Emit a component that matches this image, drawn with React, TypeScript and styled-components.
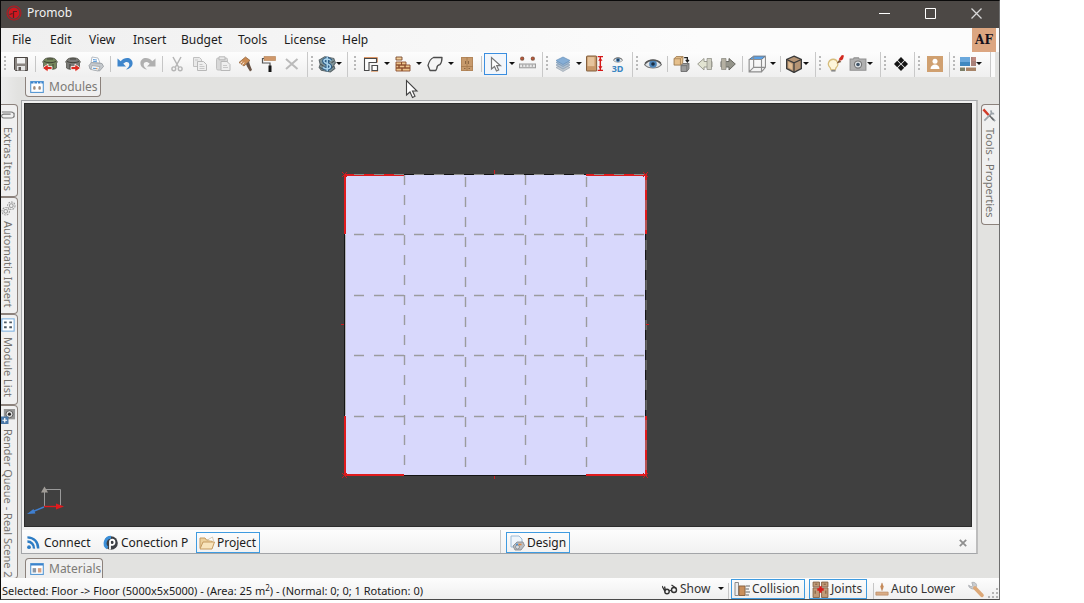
import React from 'react';
import styled, { createGlobalStyle, css } from 'styled-components';

const GlobalStyle = createGlobalStyle`
  * { box-sizing: border-box; }
  html, body { margin: 0; background: #ffffff; }
  body {
    font-family: "Noto Sans", "Open Sans", sans-serif;
    font-size: 12px;
    line-height: 16px;
    color: #1c1c1c;
  }
  button { font: inherit; color: inherit; margin: 0; padding: 0; border: 0; background: none; }
  svg { display: block; flex: none; }
`;

const Page = styled.div`
  display: flex;
  min-height: 100vh;
  padding: 0 84px 3px 0;
`;

const Window = styled.div`
  position: relative;
  flex: 1;
  min-width: 0;
  display: flex;
  flex-direction: column;
  background: #e2e2e0;
  border: 1px solid #0a0a0a;
  border-right-color: #6e6e6e;
  border-bottom-color: #4a4a4a;
`;

const TitleBar = styled.header`
  display: flex;
  align-items: center;
  height: 27px;
  padding: 0 0 3px 5px;
  background: #4c4845;
  color: #f2f2f2;
`;

const TitleText = styled.h1`
  margin: 0;
  padding-left: 5px;
  flex: 1;
  font-size: 12px;
  font-weight: 400;
  line-height: 16px;
`;

const WindowButton = styled.button`
  width: 46px;
  height: 22px;
  display: flex;
  align-items: center;
  justify-content: center;
`;

const MenuBar = styled.nav`
  display: flex;
  align-items: center;
  height: 24px;
  padding: 0 3px;
  background: linear-gradient(90deg, #efefef, #fcfcfc 70%);
`;

const MenuItem = styled.button<{ $w: number }>`
  width: ${(p) => p.$w}px;
  padding-left: 8px;
  text-align: left;
  white-space: nowrap;
`;

const Account = styled.button`
  width: 24px;
  height: 24px;
  margin-left: auto;
  background: #dca681;
  color: #14101c;
  font-family: "DejaVu Serif", serif;
  font-size: 12px;
  font-weight: 700;
`;

const ToolStrip = styled.div`
  display: flex;
  height: 25px;
  margin-right: 4px;
  background: #fbfbfb;
`;

const ToolGroup = styled.div<{ $w: number; $pad?: number }>`
  display: flex;
  align-items: center;
  flex: none;
  width: ${(p) => p.$w}px;
  padding: 0 0 2px ${(p) => p.$pad ?? 0}px;
  background: linear-gradient(#fdfdfd, #efefef);
  border-right: 1px solid #c9c9c9;
`;

const Grip = styled.span`
  width: 2px;
  height: 15px;
  margin: 0 3px;
  flex: none;
  background: repeating-linear-gradient(#b9b9b9 0 2px, transparent 2px 4px);
`;

const Separator = styled.span<{ $w?: number }>`
  width: ${(p) => p.$w ?? 6}px;
  height: 16px;
  flex: none;
  background: linear-gradient(#c6c6c6, #c6c6c6) center / 1px 100% no-repeat;
`;

const ToolButton = styled.button<{ $active?: boolean }>`
  width: 23px;
  height: 22px;
  flex: none;
  display: flex;
  align-items: center;
  justify-content: center;
  ${(p) =>
    p.$active &&
    css`
      border: 1px solid #3a8ee0;
      background: #f2f6fb;
    `}
`;

const Caret = styled.button`
  width: 9px;
  height: 22px;
  flex: none;
  display: flex;
  align-items: center;
  justify-content: center;
  &::before {
    content: '';
    border: 3px solid transparent;
    border-top-color: #111;
    border-bottom: 0;
  }
`;

const DropTool = styled.button`
  width: 31px;
  height: 22px;
  padding-left: 2px;
  flex: none;
  display: flex;
  align-items: center;
  &::after {
    content: '';
    border: 3px solid transparent;
    border-top-color: #111;
    border-bottom: 0;
  }
`;

const Body = styled.div`
  flex: 1;
  display: flex;
  min-height: 501px;
`;

const Dock = styled.div<{ $side: 'left' | 'right' }>`
  width: ${(p) => (p.$side === 'left' ? 17 : 18)}px;
  flex: none;
  display: flex;
  flex-direction: column;
  padding-top: 27px;
  overflow: hidden;
  contain: size;
  background: ${(p) => (p.$side === 'left' ? 'linear-gradient(90deg, #ececec, #e2e2e0)' : 'none')};
`;

const SideTab = styled.button<{ $h: number; $side: 'left' | 'right' }>`
  height: ${(p) => p.$h}px;
  flex: none;
  display: flex;
  flex-direction: column;
  align-items: center;
  gap: 5px;
  padding: 3px 2px 0 0;
  background: #f0f0f0;
  border: 1px solid #8c827c;
  font-size: 11px;
  ${(p) =>
    p.$side === 'left'
      ? css`
          border-left: 0;
          border-radius: 0 4px 4px 0;
        `
      : css`
          border-right: 0;
          border-radius: 4px 0 0 4px;
        `}
  color: #74726e;
  & > span {
    writing-mode: vertical-rl;
    line-height: 16px;
    white-space: nowrap;
  }
`;

const Center = styled.main`
  flex: 1;
  min-width: 0;
  display: flex;
  flex-direction: column;
  padding: 0 3px;
`;

const PanelTab = styled.button<{ $edge: 'top' | 'bottom'; $w: number }>`
  width: ${(p) => p.$w}px;
  height: 20px;
  margin-left: 4px;
  flex: none;
  display: flex;
  align-items: center;
  gap: 5px;
  padding-left: 4px;
  background: #f0f0f0;
  color: #7c7a76;
  border: 1px solid #8c827c;
  white-space: nowrap;
  ${(p) =>
    p.$edge === 'top'
      ? css`
          border-top: 0;
          border-radius: 0 0 4px 4px;
          margin-bottom: 3px;
        `
      : css`
          border-bottom: 0;
          border-radius: 4px 4px 0 0;
          margin-top: 4px;
        `}
`;

const Frame = styled.section`
  flex: 1;
  display: flex;
  flex-direction: column;
  background: #f0f0f0;
  border: 1px solid #a3a5a8;
  border-right: 2px solid #bdbdbd;
`;

const Viewport = styled.div`
  position: relative;
  flex: 1;
  display: flex;
  align-items: center;
  justify-content: center;
  margin: 2px 4px 3px 2px;
  padding: 18px 8px 0 0;
  background: #404040;
  border: 1px solid #2c2c2c;
`;

const Axes = styled.svg`
  position: absolute;
  left: 0;
  bottom: 9px;
`;

const ViewTabs = styled.div`
  display: flex;
  height: 23px;
  background: linear-gradient(#fdfdfd, #f1f1f1);
`;

const TabHalf = styled.div<{ $last?: boolean }>`
  flex: 1;
  display: flex;
  align-items: flex-end;
  gap: 4px;
  padding: ${(p) => (p.$last ? '0 0 0 5px' : '0 8px 0 0')};
  border-left: ${(p) => (p.$last ? '1px solid #c9c9c9' : '0')};
`;

const ViewTab = styled.button<{ $w: number; $active?: boolean }>`
  width: ${(p) => p.$w}px;
  height: 21px;
  flex: none;
  display: flex;
  align-items: center;
  gap: ${(p) => (p.$active ? 2 : 3)}px;
  padding-left: ${(p) => (p.$active ? 2 : 4)}px;
  white-space: nowrap;
  border: ${(p) => (p.$active ? '1px solid #3f9be0' : '0')};
`;

const CloseTab = styled.button`
  margin: 0 7px 0 auto;
  width: 10px;
  height: 21px;
  display: flex;
  align-items: center;
`;

const StatusBar = styled.footer`
  display: flex;
  align-items: flex-end;
  height: 21px;
  background: linear-gradient(#fdfdfd, #efefef);
  white-space: nowrap;
  sup { font-size: 8px; line-height: 0; vertical-align: 4px; }
`;

const StatusText = styled.p`
  flex: 1;
  margin: 0;
  padding-left: 1px;
  font-size: 11px;
`;

const StatusButton = styled.button<{ $w: number; $active?: boolean }>`
  width: ${(p) => p.$w}px;
  height: 20px;
  margin-right: 4px;
  flex: none;
  display: flex;
  align-items: center;
  gap: 2px;
  padding-left: ${(p) => (p.$active ? 2 : 0)}px;
  color: #333;
  border: ${(p) => (p.$active ? '1px solid #3f9be0' : '0')};
`;

const Pointer = styled.svg`
  position: absolute;
  left: 404px;
  top: 78px;
`;

const Ico = ({ s = 16, children }: { s?: number; children: React.ReactNode }) => (
  <svg width={s} height={s} viewBox="0 0 16 16" fill="none" aria-hidden="true">
    {children}
  </svg>
);

const Logo = () => (
  <Ico>
    <circle cx="8" cy="8" r="7" stroke="#b81820" strokeWidth="1.1" />
    <circle cx="8" cy="8" r="5.4" fill="#d01820" />
    <path d="M7.500 13V6.500h3.500M3.500 9.500l3-1" stroke="#5c1c1e" strokeWidth="1.200" />
  </Ico>
);

const Save = () => (
  <Ico>
    <path d="M1.500 1.500h13v13h-12l-1-1z" fill="#8b8682" stroke="#4a4542" />
    <path d="M4 2h8v5.500H4z" fill="#f1f1f1" />
    <path d="M4 10h8v4.500H4z" fill="#e4e4e4" />
    <path d="M5.500 11H8v3.500H5.500z" fill="#5a5451" />
  </Ico>
);

const Cart = ({ body, flip }: { body: string; flip?: boolean }) => (
  <Ico>
    <path d="M2 4c1-3 11-3 12 0l1.500 2-1 1v5c-2 2-11 2-13 0V7l-1-1z" fill={body} stroke="#4b4a42" strokeWidth=".7" />
    <path d="M2 5.500c3 1.600 9 1.600 12 0M5 3h6M5 8v5M11 8v5" stroke="#33332b" strokeWidth=".8" />
    <path
      d={flip ? 'M6 10.500h4V8l5.500 4-5.500 4v-2.500H6z' : 'M10 10.500H6V8L.5 12 6 16v-2.500h4z'}
      fill="#d92a20"
      stroke="#fff"
      strokeWidth=".8"
    />
  </Ico>
);

const Printer = () => (
  <Ico>
    <path d="M3 7 4 1l6 1 2 5z" fill="#fff" stroke="#98a2ac" strokeWidth=".7" />
    <path d="M5 3.500l4 .6M5 5.200l4 .6" stroke="#5d9bd8" />
    <path d="M1 9.500 3.500 6.500l10.500 1 1.500 3-4 4.500L2 13z" fill="#c4c8cc" stroke="#93989d" strokeWidth=".8" />
    <path d="M4 9.500l8 1.200-2 4.300-7-1.500z" fill="#eef1f3" stroke="#93989d" strokeWidth=".6" />
    <path d="M5 12.300l3 .3" stroke="#5d9bd8" />
    <path d="M8 12.600l1.500.2" stroke="#e48a3c" />
  </Ico>
);

const Undo = ({ color, redo }: { color: string; redo?: boolean }) => (
  <Ico>
    <g transform={redo ? 'translate(16 0) scale(-1 1)' : undefined}>
      <path d="M.5 2.500v8H9L6.300 7.700C9 5 12 6 12.300 8.200c.2 2-1.300 3.800-3.300 5.300 4-.5 6.500-3 6.600-6.200C15.600 1.500 8 0 3.700 5.300z" fill={color} />
    </g>
  </Ico>
);

const Cut = () => (
  <Ico>
    <path d="M4 1l5.500 10M12 1 6.500 11" stroke="#b5b5b5" strokeWidth="1.500" />
    <circle cx="4.800" cy="12.800" r="1.900" stroke="#b5b5b5" strokeWidth="1.400" />
    <circle cx="11.200" cy="12.800" r="1.900" stroke="#b5b5b5" strokeWidth="1.400" />
  </Ico>
);

const Copy = () => (
  <Ico>
    <path d="M1.500 1.500h6l2 2v7h-8z" fill="#e9e9e9" stroke="#c0c0c0" />
    <path d="M5.500 5.500h6l3 3v6h-9z" fill="#efefef" stroke="#b8b8b8" />
    <path d="M7.500 8.500h3M7.500 10.500h5M7.500 12.500h5M3 4h3" stroke="#c8c8c8" />
  </Ico>
);

const Paste = () => (
  <Ico>
    <rect x="1.500" y="2" width="11" height="12" rx="1.500" fill="#d8d8d8" stroke="#c0c0c0" />
    <path d="M4 .8h6v3H4z" fill="#e9e9e9" stroke="#b8b8b8" />
    <path d="M6 5.500h6l3 3v6H6z" fill="#efefef" stroke="#b8b8b8" />
    <path d="M8 9.500h4M8 11.500h5" stroke="#c8c8c8" />
  </Ico>
);

const Brush = () => (
  <Ico>
    <path d="M1 6.500 7.500 1 12 4.500 6 10z" fill="#c98b54" stroke="#8b5b34" strokeWidth=".7" />
    <path d="M2.500 7.500l1.500-2M4.500 8.500l1.500-2" stroke="#fff" />
    <path d="M8 8l3-2.500 1 3.500 2 5-2 1.500-3-5z" fill="#6b5446" />
  </Ico>
);

const Roller = () => (
  <Ico>
    <path d="M3 .5h11.500v4H3z" fill="#d0986a" stroke="#b98a60" strokeWidth=".7" />
    <path d="M3 2.500H1.500v4.500H9V10" stroke="#555" strokeWidth="1.200" />
    <path d="M7.500 9.500h3V16h-3z" fill="#151515" />
  </Ico>
);

const Delete = () => (
  <Ico>
    <path d="M2 3l11.500 10M13.500 3 2 13" stroke="#bababa" strokeWidth="2" />
  </Ico>
);

const Money = () => (
  <Ico s={18}>
    <path d="M1 4.500 6 1.500l8 1.500 1.500 4-1.500 2 1 3-4 3-8-1.500L1 11l1-2.500z" fill="#7f9498" stroke="#5a6468" strokeWidth=".9" />
    <path d="M2 8l3 2M2 11l3 2M11 12l3-2M12 7l2-1.500" stroke="#4c5558" />
    <path d="M11.500 5C9.500 2.800 5 3.300 5.200 5.600 5.400 8 11 7.500 11 10.300c0 2.500-4.500 2.700-6.500.7M8.200 1.500v13" stroke="#2a5a84" strokeWidth="3" />
    <path d="M11.500 5C9.500 2.800 5 3.300 5.200 5.600 5.400 8 11 7.500 11 10.300c0 2.500-4.500 2.700-6.500.7M8.200 1.500v13" stroke="#a9d2ea" strokeWidth="1.300" />
  </Ico>
);

const Walls = () => (
  <Ico>
    <path d="M1 1.500h13.500" stroke="#e08a50" />
    <path d="M1.500 14.500V2H14.500V6.500" stroke="#d9a078" />
    <path d="M1.500 14.500V2.500h12v4H6v8z" fill="#fdfdfd" stroke="#4a4a4a" strokeWidth="1.100" />
    <path d="M9 9.500h5.500v5H9z" fill="#fff" stroke="#4a4a4a" strokeWidth="1.200" />
    <path d="M8 15.500h7" stroke="#e0a070" strokeWidth=".8" />
  </Ico>
);

const Bricks = () => (
  <Ico>
    <path d="M1 1h6v3H1z" fill="#f0cf9c" stroke="#7a4a2c" strokeWidth=".9" />
    <path d="M1 6h5.500v3H1zM6.500 6H11v3H6.500zM1 9h3v3H1zM4 9h6v3H4zM10 9h5v3h-5zM1 12h6v3H1zM7 12h8v3H7z" fill="#ecc48c" stroke="#8b4c2c" strokeWidth=".9" />
  </Ico>
);

const Shape = () => (
  <Ico>
    <path d="M6.500 1.500h8.500c0 3.500-1 6-2.200 7.200-1.500.3-3 1.500-3 3.800l-1 2H3L1 9.500c1-4 3-7 5.500-8z" fill="#f5f5f5" stroke="#4d4d4d" strokeWidth="1.300" strokeLinejoin="round" />
  </Ico>
);

const Cabinet = () => (
  <Ico>
    <rect x="2.500" y="1.500" width="11" height="13" fill="#c79a6c" stroke="#b3865a" />
    <path d="M8 1v14M2 10.500h12" stroke="#a5784c" strokeWidth=".8" />
    <path d="M6.500 5v3M9.500 5v3M5 12.500h1.500M9.500 12.500H11" stroke="#7c5a38" strokeWidth=".8" />
  </Ico>
);

const Arrow = () => (
  <Ico>
    <path d="M3.500 1.500v11.500l3-2.500 2 4.500 2.200-1-2-4.300h3.800z" fill="#fff" stroke="#777" strokeWidth="1.200" />
  </Ico>
);

const Ruler = () => (
  <Ico s={17}>
    <circle cx="3" cy="3.500" r="2" fill="#8c5a44" />
    <circle cx="13" cy="3.500" r="2" fill="#8c5a44" />
    <path d="M2 3h1.500M12 3h1.500" stroke="#e8502c" />
    <rect x=".5" y="8.500" width="15" height="3.500" fill="#e8e8e8" stroke="#9c9c9c" />
    <path d="M3.500 9v2M6.500 9v2M9.500 9v2M12.500 9v2" stroke="#9c9c9c" />
  </Ico>
);

const Layers = () => (
  <Ico>
    <path d="M1 11.500l7-3.500 7 3.500-7 4z" fill="#c2c8ce" stroke="#98a6b4" strokeWidth=".7" />
    <path d="M1 9l7-3.500L15 9l-7 4z" fill="#b0c0d0" stroke="#869cb2" strokeWidth=".7" />
    <path d="M1 6.500 8 3l7 3.500-7 4z" fill="#9ab4ce" stroke="#7896b4" strokeWidth=".7" />
    <path d="M1 4.500 8 1l7 3.500-7 4z" fill="#86aed6" stroke="#6890ba" strokeWidth=".7" />
  </Ico>
);

const Height = () => (
  <Ico s={17}>
    <rect x=".5" y="1" width="9.500" height="14" rx="1" fill="#c99868" stroke="#84603e" />
    <path d="M1.500 2h6.500v8.500H1.500z" fill="#e6c49c" />
    <path d="M11 1.500h5M11 14.500h5M13.500 2v12" stroke="#d41818" strokeWidth="1.300" />
    <path d="M11.500 5.500l2-3 2 3zM11.500 10.500l2 3 2-3z" fill="#d41818" />
  </Ico>
);

const Eye = ({ s = 18 }: { s?: number }) => (
  <Ico s={s}>
    <path d="M.5 8.500C4 3.500 12 3.500 15.500 8.500 12 12.500 4 12.500.5 8.500z" fill="#e0e4e8" stroke="#777" />
    <circle cx="8" cy="8" r="3.400" fill="#4a83b8" />
    <circle cx="8" cy="8" r="1.600" fill="#1a2e44" />
    <path d="M1 7.500C4.500 3.500 11.500 3.500 15 7.500" stroke="#555" strokeWidth="1.300" />
  </Ico>
);

const ThreeDBox = styled.span`
  display: flex;
  flex-direction: column;
  align-items: center;
  font-size: 9px;
  font-weight: 700;
  line-height: 8px;
  color: #3a86c2;
`;

const Swap = () => (
  <Ico s={17}>
    <path d="M1 3.500 3 1.500h6.500L9 8 7 9.500H1z" fill="#e6c08c" stroke="#9a7548" strokeWidth=".8" />
    <path d="M1 3.500h6V9.500M7 3.500l2-2" stroke="#9f7b50" strokeWidth=".7" />
    <path d="M7.500 10l2-2h5.500v5l-2 2.500H7.500z" fill="#9c9c9c" stroke="#666" strokeWidth=".8" />
    <path d="M7.500 10H13v5.500M13 10l2-2" stroke="#666" strokeWidth=".7" />
    <path d="M10.500 2.500h3V6M12 4.500l1.500 2 1.500-2" stroke="#222" strokeWidth="1.200" />
  </Ico>
);

const Step = ({ next }: { next?: boolean }) => (
  <Ico>
    <g transform={next ? 'translate(16 0) scale(-1 1)' : undefined}>
      <path d="M.7 8 7 2.500V5.500h8v5.500H7v3z" fill={next ? '#94948a' : '#e2e4d2'} stroke={next ? '#66665f' : '#9b9b90'} />
      <path d="M10 2.500h4.500v11H10z" fill={next ? '#b4b0a2' : '#cfcfc2'} stroke="#88887f" strokeWidth=".7" />
    </g>
  </Ico>
);

const WireBox = () => (
  <Ico s={18}>
    <path d="M1 4l4-3h10.500L12 4z" fill="#5aa0e6" stroke="#5c6a7a" strokeWidth=".8" />
    <path d="M1 4h11v11H1zM12 15l3.500-4V1M5 1v10l-4 4M5 11h10.500" stroke="#8d8d8d" strokeWidth="1" />
  </Ico>
);

const Crate = () => (
  <Ico s={18}>
    <path d="M8 1l6.500 3v8L8 15.500 1.500 12V4z" fill="#b59474" stroke="#3a3a3a" strokeWidth="1.200" />
    <path d="M1.500 4 8 7l6.500-3M8 7v8.500" stroke="#3a3a3a" strokeWidth="1.100" />
    <path d="M3 6l3.500 2v5L3 11z" fill="#e0bc92" />
  </Ico>
);

const Bulb = () => (
  <Ico s={17}>
    <path d="M6 4a4.500 4.500 0 0 0-3 8l.8 2h4l.7-2A4.500 4.500 0 0 0 6 4z" fill="#fdf6da" stroke="#d6bd7c" strokeWidth="1.200" />
    <path d="M4 14.800h4" stroke="#888" strokeWidth="1.600" />
    <path d="M9 8l2.500-3.500 2 2z" fill="#7a5335" />
    <path d="M11 4l3-4 2 .5-1 3.500-2 1.500z" fill="#d22a20" />
  </Ico>
);

const Camera = () => (
  <Ico s={18}>
    <path d="M1 3.500h3l.5-1h4l.5 1h6v10H1z" fill="#b0b0b0" stroke="#929292" />
    <circle cx="8" cy="8.500" r="3.200" fill="#dfe3e6" stroke="#777" />
    <circle cx="8" cy="8.500" r="1.600" fill="#3f5468" />
  </Ico>
);

const Diamonds = () => (
  <Ico>
    <path d="M8 1l3.200 3.200L8 7.400 4.800 4.200zM8 8.600l3.200 3.200L8 15l-3.200-3.200zM4.200 4.800 7.400 8l-3.200 3.200L1 8zM11.800 4.800 15 8l-3.200 3.200L8.600 8z" fill="#151515" />
  </Ico>
);

const Person = () => (
  <Ico>
    <rect width="16" height="16" fill="#d0a070" />
    <circle cx="8" cy="5.300" r="2.500" fill="#fff" />
    <path d="M3.500 13c0-6 9-6 9 0z" fill="#fff" />
  </Ico>
);

const Tiles = () => (
  <Ico>
    <path d="M0 1h10v9H0z" fill="#6aa8dc" />
    <path d="M0 6h10v4H0z" fill="#3f88c0" />
    <path d="M11 1h5v9h-5z" fill="#a88078" />
    <path d="M12.500 1H16v4h-3.500z" fill="#c08a80" />
    <path d="M0 11.500h5V15H0z" fill="#7c7f68" />
    <path d="M6 11.500h10V15H6z" fill="#a88468" />
  </Ico>
);

const ModuleIcon = ({ s = 14 }: { s?: number }) => (
  <Ico s={s}>
    <rect x=".8" y="1.800" width="14.400" height="12.400" fill="#fff" stroke="#5a9ad4" strokeWidth="1.300" />
    <path d="M1 3h14" stroke="#3b82cc" strokeWidth="2" strokeDasharray="3 1" />
    <ellipse cx="5" cy="9" rx="1.500" ry="2.200" fill="#a08c7c" />
    <ellipse cx="11" cy="9" rx="1.500" ry="2.200" fill="#a08c7c" />
  </Ico>
);

const ListIcon = () => (
  <Ico s={14}>
    <rect x="1" y="1" width="14" height="14" fill="#fff" stroke="#7aaede" strokeWidth="1.200" />
    <path d="M3.500 5h3M9.500 5h3M3.500 10.500h3M9.500 10.500h3" stroke="#4d5964" strokeWidth="2.200" />
  </Ico>
);

const MaterialIcon = () => (
  <Ico s={14}>
    <rect x=".8" y="1.800" width="14.400" height="12.400" fill="#fff" stroke="#5a9ad4" strokeWidth="1.300" />
    <path d="M1 3h14" stroke="#3b82cc" strokeWidth="2" />
    <path d="M3 7h4v5H3z" fill="#8d96a3" />
    <path d="M9 7h4v5H9z" fill="#d8a080" />
  </Ico>
);

const Clip = () => (
  <Ico s={14}>
    <path d="M1 4.500h10.500a3.500 3.500 0 0 1 0 7H3a2.200 2.200 0 0 1 0-4.500H11M15 5.500v5" stroke="#777" strokeWidth="1.200" />
  </Ico>
);

const Spring = () => (
  <Ico s={15}>
    <g stroke="#9a9a9a" strokeWidth="1.100">
      <circle cx="11" cy="5" r="4" strokeDasharray="2 1" />
      <circle cx="11" cy="5" r="2" />
      <circle cx="5" cy="11" r="4" strokeDasharray="2 1" />
      <circle cx="5" cy="11" r="2" />
    </g>
  </Ico>
);

const RenderIcon = () => (
  <Ico s={15}>
    <path d="M3 0h12v11H3z" fill="#969696" />
    <circle cx="9" cy="5.500" r="3.800" fill="#e0e0e0" stroke="#555" />
    <circle cx="9" cy="5.500" r="1.700" fill="#2a2a2a" />
    <path d="M0 8h8v8H0z" fill="#4a78a8" />
    <path d="M4 9.500v5M1.500 12h5" stroke="#fff" strokeWidth="1.300" />
  </Ico>
);

const ToolsIcon = () => (
  <Ico s={15}>
    <path d="M2.500 13.500 11 5M10 2.500c-1 2 .5 4 3 3.500M10 10l4 4" stroke="#9da4aa" strokeWidth="1.900" />
    <path d="M8 8l4.500 5" stroke="#666" strokeWidth="1.500" />
    <path d="M1.500 1.500 7 7.500" stroke="#d03a28" strokeWidth="2.600" />
  </Ico>
);

const Rss = () => (
  <Ico s={15}>
    <circle cx="3.200" cy="13" r="2" fill="#2d7cc4" />
    <path d="M1.500 7a7 7 0 0 1 7 7.500M1.500 2.500c7 0 11.500 5 11.500 12" stroke="#2d7cc4" strokeWidth="2.600" />
  </Ico>
);

const PIcon = () => (
  <Ico s={16}>
    <circle cx="9" cy="8" r="6.800" fill="#3c3f44" />
    <path d="M9 2.200A6 6 0 0 0 5.500 13" stroke="#3b8fd8" strokeWidth="3" />
    <path d="M8 14.500V6.800c0-2.800 4.500-2.800 4.500.4S9 10.300 8 8.800" stroke="#fff" strokeWidth="1.800" />
  </Ico>
);

const Folder = () => (
  <Ico>
    <path d="M1 13V3h5l1.500 2H13v2" fill="#ecd09c" stroke="#c49a60" />
    <path d="M1 14 4 7h11.500L13 14z" fill="#f8e4bc" stroke="#c49a60" />
    <path d="M8.500 5l5-3 1 4" fill="#fff" stroke="#c8b698" strokeWidth=".7" />
  </Ico>
);

const DesignIcon = () => (
  <Ico>
    <path d="M2 1h8l3 3v8H2z" fill="#eef5fb" stroke="#9cbcd8" />
    <path d="M4 11l4-4h6l1.500 3.500L12 15H6z" fill="#b9bdc2" stroke="#7f8488" strokeWidth=".8" />
    <circle cx="8.500" cy="12" r="2" fill="#d8dce0" stroke="#7a7e82" strokeWidth=".7" />
    <path d="M9.500 9.500h3" stroke="#e3853a" strokeWidth="1.500" />
    <path d="M7 9.500h2" stroke="#4a90d0" strokeWidth="1.500" />
  </Ico>
);

const Glasses = () => (
  <Ico>
    <circle cx="5" cy="10.500" r="2.200" stroke="#333" strokeWidth="1.400" />
    <circle cx="12" cy="9" r="2.500" stroke="#333" strokeWidth="1.400" />
    <path d="M0 5l3 5.500M2.500 5.500l1 4M7 10l3-1M9.500 4l4.500 3" stroke="#333" strokeWidth="1.300" />
  </Ico>
);

const CollisionIcon = () => (
  <Ico>
    <path d="M1 1.500h3.500v13H1z" fill="#ececec" stroke="#8a8a8a" />
    <path d="M5 5h6v9.500H5z" fill="#c98f5c" stroke="#8a6443" />
    <path d="M11.500 5H16M11.500 8H15M11.500 11H16M11.500 14H15" stroke="#666" />
  </Ico>
);

const JointsIcon = () => (
  <Ico s={17}>
    <path d="M1 1h6v4.500H1zM9 1h6v4.500H9zM1 6.500h6v9H1zM9 6.500h6v9H9z" fill="#c09a78" stroke="#7e5c40" strokeWidth=".8" />
    <path d="M3 3h2M11 3h2M3 9v3M13 9v3" stroke="#6e4c30" strokeWidth=".8" />
    <path d="M8 5v6M5 8h6" stroke="#d81a1a" strokeWidth="2.400" />
  </Ico>
);

const LowerIcon = () => (
  <Ico s={14}>
    <path d="M8 1.500 10 5l-1 3.500H7L6 5z" fill="#d09868" />
    <path d="M8 1v9" stroke="#b67a4c" />
    <path d="M1 11.500h14V15H1z" fill="#d8ac86" stroke="#b88860" strokeWidth=".8" />
  </Ico>
);

const Wrench = () => (
  <Ico s={17}>
    <path d="M4.500 1.500c2.500-1 5 1 4.500 3.500L7 7.500C4 8 1.500 6 1.500 4L4 5.500 5.500 4z" fill="#c9ccd0" stroke="#a0a3a7" strokeWidth=".7" />
    <path d="M7.500 6.500 14 13.500" stroke="#dca878" strokeWidth="3.500" strokeLinecap="round" />
  </Ico>
);

const SizeGrip = () => (
  <svg width="11" height="11" viewBox="0 0 11 11" fill="#b4b4b4" aria-hidden="true">
    <path d="M8 0h2v2H8zM4 4h2v2H4zM8 4h2v2H8zM0 8h2v2H0zM4 8h2v2H4zM8 8h2v2H8z" />
  </svg>
);

const gridLines = [64, 125, 185, 246];

const FloorPlan = () => (
  <svg width="309" height="309" viewBox="0 0 309 309" fill="none" role="img" aria-label="Floor plan">
    <rect x="4" y="4" width="302" height="302" fill="#141414" />
    <rect x="5" y="5" width="300" height="300" fill="#d8d8fc" />
    <path d="M5.500 65v180" stroke="#b4b4bc" />
    {gridLines.map((y) => (
      <path key={y} d={`M14 ${y + 0.5}H305`} stroke="#9b9b9e" strokeWidth="1.400" strokeDasharray="10 10" />
    ))}
    {gridLines.map((x, i) => (
      <path key={x} d={`M${x + 0.5} 5V300`} stroke="#9b9b9e" strokeWidth="1.400" strokeDasharray="10 10" strokeDashoffset={i % 2 ? -2 : 0} />
    ))}
    <path d="M5 64V5H64M246 5h60V64M306 246v59H246M64 305H5V246" stroke="#e01b1e" strokeWidth="2" />
    <path d="M14 4.500H305M306 10V300" stroke="#8d8d8a" strokeDasharray="10 10" />
    <path
      d="M2 2l5 5M7 2 2 7M303 2l5 5M308 2l-5 5M2 303l5 5M7 303l-5 5M303 303l5 5M308 303l-5 5M154.500 0v4M154.500 306v3M1 154.500h3M306 154.500h3"
      stroke="#c81c20"
    />
  </svg>
);

const menus: [string, number][] = [
  ['File', 38],
  ['Edit', 39],
  ['View', 44],
  ['Insert', 48],
  ['Budget', 57],
  ['Tools', 46],
  ['License', 58],
  ['Help', 44],
];

const Tool = ({ label, active, children }: { label: string; active?: boolean; children: React.ReactNode }) => (
  <ToolButton type="button" aria-label={label} $active={active}>
    {children}
  </ToolButton>
);

const SplitTool = ({ label, active, children }: { label: string; active?: boolean; children: React.ReactNode }) => (
  <>
    <Tool label={label} active={active}>
      {children}
    </Tool>
    <Caret type="button" aria-label={`${label} options`} />
  </>
);

export default function App() {
  return (
    <Page>
      <GlobalStyle />
      <Window>
        <TitleBar>
          <Logo />
          <TitleText>Promob</TitleText>
          <WindowButton type="button" aria-label="Minimize">
            <svg width="11" height="11" stroke="#fff"><path d="M0 5.500h11" /></svg>
          </WindowButton>
          <WindowButton type="button" aria-label="Maximize">
            <svg width="11" height="11" stroke="#fff" fill="none"><path d="M.5.5h10v10H.5z" /></svg>
          </WindowButton>
          <WindowButton type="button" aria-label="Close">
            <svg width="11" height="11" stroke="#d8d8d8" strokeWidth="1.300"><path d="M.5.5l10 10M10.500.5l-10 10" /></svg>
          </WindowButton>
        </TitleBar>

        <MenuBar>
          {menus.map(([name, w]) => (
            <MenuItem key={name} type="button" $w={w}>{name}</MenuItem>
          ))}
          <Account type="button">AF</Account>
        </MenuBar>

        <ToolStrip role="toolbar" aria-label="Main tools">
          <ToolGroup $w={307}>
            <Grip />
            <Tool label="Save"><Save /></Tool>
            <Separator />
            <Tool label="Import"><Cart body="#75865c" /></Tool>
            <Tool label="Export"><Cart body="#7a7a78" flip /></Tool>
            <Tool label="Print"><Printer /></Tool>
            <Separator />
            <Tool label="Undo"><Undo color="#3f86cc" /></Tool>
            <Tool label="Redo"><Undo color="#b0b0b0" redo /></Tool>
            <Separator />
            <Tool label="Cut"><Cut /></Tool>
            <Tool label="Copy"><Copy /></Tool>
            <Tool label="Paste"><Paste /></Tool>
            <Tool label="Brush"><Brush /></Tool>
            <Tool label="Paint"><Roller /></Tool>
            <Tool label="Delete"><Delete /></Tool>
          </ToolGroup>
          <ToolGroup $w={40}>
            <Grip />
            <DropTool type="button" aria-label="Budget"><Money /></DropTool>
          </ToolGroup>
          <ToolGroup $w={195} $pad={3}>
            <Grip />
            <SplitTool label="Walls"><Walls /></SplitTool>
            <SplitTool label="Bricks"><Bricks /></SplitTool>
            <SplitTool label="Shape"><Shape /></SplitTool>
            <Tool label="Cabinet"><Cabinet /></Tool>
            <Separator />
            <SplitTool label="Select" active><Arrow /></SplitTool>
            <Tool label="Measure"><Ruler /></Tool>
          </ToolGroup>
          <ToolGroup $w={90}>
            <Grip />
            <SplitTool label="Layers"><Layers /></SplitTool>
            <Tool label="Height"><Height /></Tool>
            <Tool label="View 3D"><ThreeDBox><Eye s={10} />3D</ThreeDBox></Tool>
          </ToolGroup>
          <ToolGroup $w={183}>
            <Grip />
            <Tool label="Visibility"><Eye /></Tool>
            <Separator />
            <Tool label="Swap"><Swap /></Tool>
            <Tool label="Previous"><Step /></Tool>
            <Tool label="Next"><Step next /></Tool>
            <Separator />
            <SplitTool label="Perspective"><WireBox /></SplitTool>
            <Separator />
            <DropTool type="button" aria-label="Box"><Crate /></DropTool>
          </ToolGroup>
          <ToolGroup $w={65}>
            <Grip />
            <Tool label="Light"><Bulb /></Tool>
            <DropTool type="button" aria-label="Camera"><Camera /></DropTool>
          </ToolGroup>
          <ToolGroup $w={34}>
            <Grip />
            <Tool label="Catalog"><Diamonds /></Tool>
          </ToolGroup>
          <ToolGroup $w={35}>
            <Grip />
            <Tool label="Customer"><Person /></Tool>
          </ToolGroup>
          <ToolGroup $w={41}>
            <Grip />
            <DropTool type="button" aria-label="Layout"><Tiles /></DropTool>
          </ToolGroup>
        </ToolStrip>

        <Body>
          <Dock $side="left">
            <SideTab type="button" $side="left" $h={93}><Clip /><span>Extras Items</span></SideTab>
            <SideTab type="button" $side="left" $h={117}><Spring /><span>Automatic Insert</span></SideTab>
            <SideTab type="button" $side="left" $h={91}><ListIcon /><span>Module List</span></SideTab>
            <SideTab type="button" $side="left" $h={174}><RenderIcon /><span>Render Queue - Real Scene 2</span></SideTab>
          </Dock>
          <Center>
            <PanelTab type="button" $edge="top" $w={76}><ModuleIcon />Modules</PanelTab>
            <Frame>
              <Viewport>
                <FloorPlan />
                <Axes width="42" height="34" viewBox="0 0 42 34" fill="none" aria-hidden="true">
                  <path d="M19.500 23.500V7M19.500 6.500h16v16" stroke="#9a9a9a" />
                  <path d="M16 9.500l3.500-6 3.500 6z" fill="#a19d98" />
                  <path d="M19 23.500h14" stroke="#e01b1e" strokeWidth="1.400" />
                  <path d="M31 20.500l8 3-8 3z" fill="#e01b1e" />
                  <path d="M19 24 8 28.500" stroke="#3f7fd0" strokeWidth="1.400" />
                  <path d="M2 31l6.500-5 2 4.500z" fill="#3f7fd0" />
                </Axes>
              </Viewport>
              <ViewTabs>
                <TabHalf>
                  <ViewTab type="button" $w={72}><Rss />Connect</ViewTab>
                  <ViewTab type="button" $w={94}><PIcon />Conection P</ViewTab>
                  <ViewTab type="button" $w={64} $active><Folder />Project</ViewTab>
                </TabHalf>
                <TabHalf $last>
                  <ViewTab type="button" $w={64} $active><DesignIcon />Design</ViewTab>
                  <CloseTab type="button" aria-label="Close view">
                    <svg width="8" height="8" stroke="#8f8f8f" strokeWidth="1.800"><path d="M.8.8l6.400 6.400M7.200.8.8 7.200" /></svg>
                  </CloseTab>
                </TabHalf>
              </ViewTabs>
            </Frame>
            <PanelTab type="button" $edge="bottom" $w={78}><MaterialIcon />Materials</PanelTab>
          </Center>
          <Dock $side="right">
            <SideTab type="button" $side="right" $h={121}><ToolsIcon /><span>Tools - Properties</span></SideTab>
          </Dock>
        </Body>

        <StatusBar>
          <StatusText>
            Selected: Floor -&gt; Floor (5000x5x5000) - (Area: 25 m<sup>2</sup>) - (Normal: 0; 0; 1 Rotation: 0)
          </StatusText>
          <StatusButton type="button" $w={50}><Glasses />Show</StatusButton>
          <Caret type="button" aria-label="Show options" />
          <Separator />
          <StatusButton type="button" $w={74} $active><CollisionIcon />Collision</StatusButton>
          <StatusButton type="button" $w={58} $active><JointsIcon />Joints</StatusButton>
          <Separator $w={4} />
          <StatusButton type="button" $w={88}><LowerIcon />Auto Lower</StatusButton>
          <StatusButton type="button" $w={17} aria-label="Settings"><Wrench /></StatusButton>
          <SizeGrip />
        </StatusBar>

        <Pointer width="14" height="20" viewBox="0 0 14 20" aria-hidden="true">
          <path d="M1.500 1.500v14.500l3.500-3 2.500 5.500 2.500-1.200-2.500-5.300h4.500z" fill="#fff" stroke="#444" strokeWidth="1.100" />
        </Pointer>
      </Window>
    </Page>
  );
}
